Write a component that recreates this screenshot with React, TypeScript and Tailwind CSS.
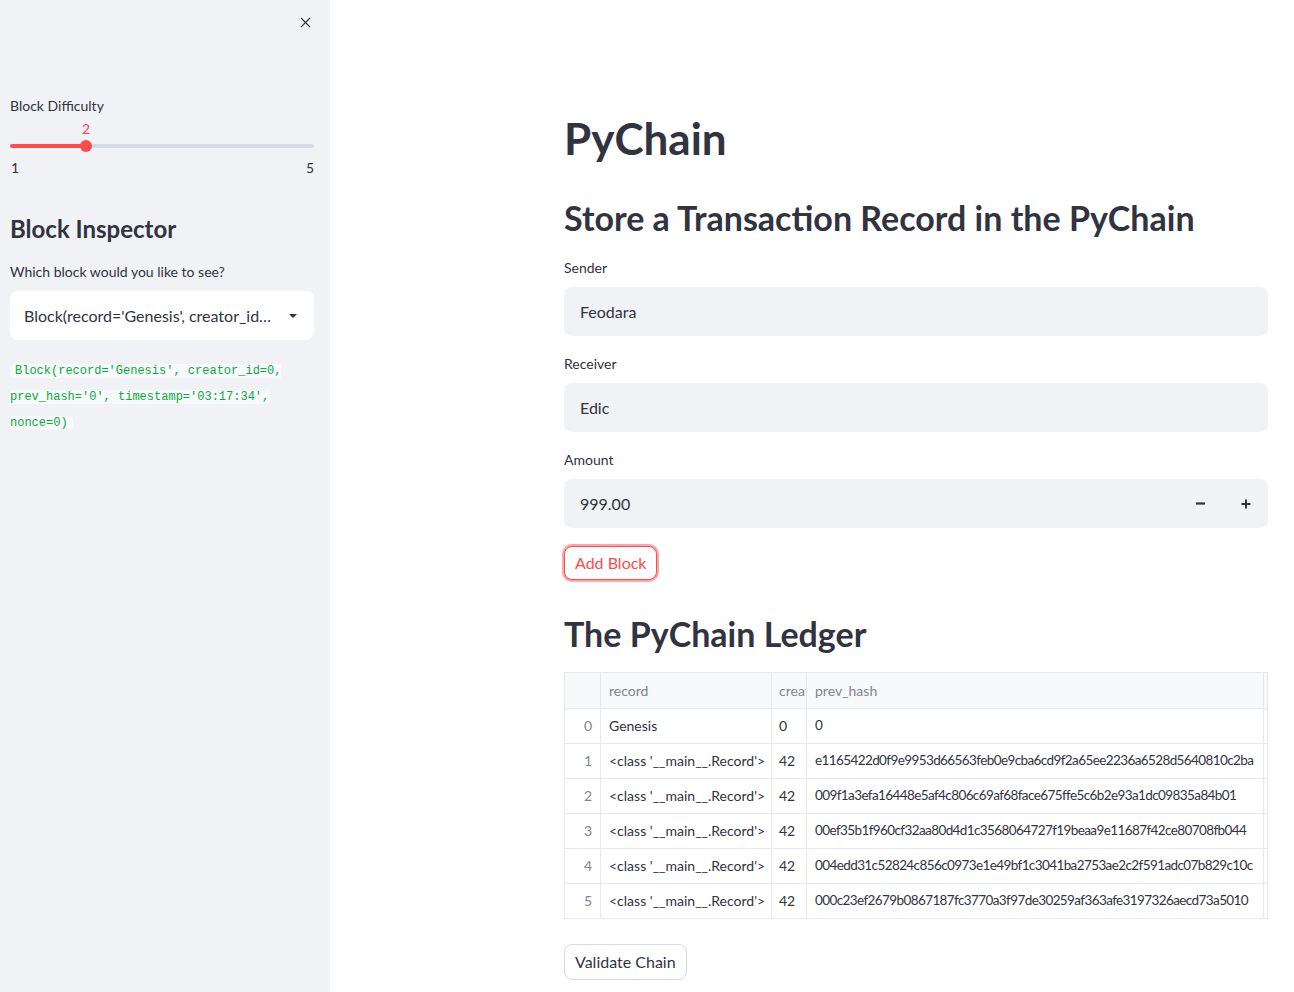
import { X } from 'lucide-react';

const ROWS = [
  { i: 0, record: 'Genesis', creator: '0', hash: '0' },
  { i: 1, record: "<class '__main__.Record'>", creator: '42', hash: 'e1165422d0f9e9953d66563feb0e9cba6cd9f2a65ee2236a6528d5640810c2ba' },
  { i: 2, record: "<class '__main__.Record'>", creator: '42', hash: '009f1a3efa16448e5af4c806c69af68face675ffe5c6b2e93a1dc09835a84b01' },
  { i: 3, record: "<class '__main__.Record'>", creator: '42', hash: '00ef35b1f960cf32aa80d4d1c3568064727f19beaa9e11687f42ce80708fb044' },
  { i: 4, record: "<class '__main__.Record'>", creator: '42', hash: '004edd31c52824c856c0973e1e49bf1c3041ba2753ae2c2f591adc07b829c10c' },
  { i: 5, record: "<class '__main__.Record'>", creator: '42', hash: '000c23ef2679b0867187fc3770a3f97de30259af363afe3197326aecd73a5010' },
];

const SANS = "font-['Lato',sans-serif]";
const MONO = "font-['Liberation_Mono',monospace]";

function TextField({ label, value }: { label: string; value: string }) {
  return (
    <div className="mt-[18px]">
      <div className="h-5 text-sm leading-5 text-[#31333f]">{label}</div>
      <div className="mt-[9px] h-[49px] rounded-lg bg-[#f0f2f6] px-4 flex items-center text-base text-[#31333f]">{value}</div>
    </div>
  );
}

function Sidebar() {
  return (
    <aside className="w-[330px] shrink-0 bg-[#f0f2f6] min-h-screen pl-[10px] pr-4 relative">
      <button className="absolute right-[16px] top-[14px] text-[#31333f]">
        <X size={17} strokeWidth={1.6} />
      </button>
      <div className="pt-[96px] h-5 text-sm leading-5 text-[#31333f] box-content">Block Difficulty</div>
      <div className="relative mt-[3px] h-[20px]">
        <span className="absolute left-[76px] -translate-x-1/2 top-0 text-sm leading-5 text-[#ff4b4b]">2</span>
      </div>
      <div className="relative mt-px h-3 flex items-center">
        <div className="h-1 w-full rounded-full bg-[#d5dae5]" />
        <div className="absolute left-0 h-1 w-[76px] rounded-full bg-[#ff4b4b]" />
        <div className="absolute left-[70px] h-3 w-3 rounded-full bg-[#ff4b4b]" />
      </div>
      <div className="mt-[6px] flex justify-between text-sm leading-5 text-[#31333f]">
        <span className="pl-px">1</span>
        <span>5</span>
      </div>
      <h2 className="mt-[33px] text-2xl font-bold leading-9 text-[#31333f]">Block Inspector</h2>
      <div className="mt-[15px] text-sm leading-5 text-[#31333f]">Which block would you like to see?</div>
      <div className="mt-[9px] h-[49px] rounded-lg bg-white pl-[14px] pr-[16px] flex items-center text-base text-[#31333f]">
        <span className="flex-1 truncate">Block(record='Genesis', creator_id=0, prev_hash='0', timestamp='03:17:34', nonce=0)</span>
        <svg width="10" height="6" viewBox="0 0 10 6" className="ml-4 shrink-0"><path d="M1 1h8L5 5z" fill="#31333f" /></svg>
      </div>
      <p className={`mt-[18px] text-[12px] leading-[26px] ${MONO}`}>
        <code className="bg-[#f8f9fb] text-[#09ab3b] px-[5px] rounded">
          Block(record='Genesis', creator_id=0, prev_hash='0', timestamp='03:17:34', nonce=0)
        </code>
      </p>
    </aside>
  );
}

function Ledger() {
  const grid = 'grid grid-cols-[36px_171px_35px_457px_1fr]';
  const cell = 'px-2 h-[34px] flex items-center whitespace-nowrap overflow-hidden border-r border-[#e6e9ef]';
  return (
    <div className="mt-4 border border-[#e6e9ef] overflow-hidden text-sm text-[#31333f]">
      <div className={`${grid} bg-[#f8f9fb] border-b border-[#e6e9ef]`}>
        <div className={`${cell} h-[35px]`} />
        <div className={`${cell} h-[35px] text-[#808495]`}>record</div>
        <div className={`${cell} h-[35px] text-[#808495] px-[7px]`}>creator_id</div>
        <div className={`${cell} h-[35px] text-[#808495]`}>prev_hash</div>
        <div className="h-[35px]" />
      </div>
      {ROWS.map((r, idx) => (
        <div key={r.i} className={`${grid} ${idx < ROWS.length - 1 ? 'border-b border-[#e6e9ef]' : ''}`}>
          <div className={`${cell} justify-end text-[#808495]`}>{r.i}</div>
          <div className={cell}>{r.record}</div>
          <div className={`${cell} px-[7px]`}>{r.creator}</div>
          <div className={`${cell} text-[13.5px] tracking-[-0.6px]`}>{r.hash}</div>
          <div className="h-[34px]" />
        </div>
      ))}
    </div>
  );
}

export default function App() {
  return (
    <div className={`flex min-h-screen bg-white ${SANS}`}>
      <Sidebar />
      <main className="flex-1 min-w-0 pl-[234px] pr-[26px] pt-[112px] pb-10">
        <h1 className="text-[44px] font-bold leading-[52px] text-[#31333f]">PyChain</h1>
        <h2 className="mt-[32px] text-[34px] font-bold leading-[44px] text-[#31333f]">Store a Transaction Record in the PyChain</h2>
        <div className="mt-px">
          <TextField label="Sender" value="Feodara" />
          <TextField label="Receiver" value="Edic" />
          <div className="mt-[18px]">
            <div className="h-5 text-sm leading-5 text-[#31333f]">Amount</div>
            <div className="mt-[9px] h-[49px] rounded-lg bg-[#f0f2f6] flex items-center text-base text-[#31333f]">
              <span className="flex-1 px-4">999.00</span>
              <div className="flex items-center">
                <span className="w-[45px] flex justify-center">
                  <svg width="9" height="3" viewBox="0 0 9 3"><rect width="9" height="2.2" y="0.4" fill="#31333f" /></svg>
                </span>
                <span className="w-[45px] flex justify-center">
                  <svg width="10" height="10" viewBox="0 0 10 10"><path d="M5 0.5v9M0.5 5h9" stroke="#31333f" strokeWidth="2" /></svg>
                </span>
              </div>
            </div>
          </div>
        </div>
        <button className="mt-[18px] h-[34px] px-[10px] rounded-lg border border-[#ff4b4b] bg-white text-base text-[#ff4b4b] ring-2 ring-[#ff4b4b]/50">
          Add Block
        </button>
        <h2 className="mt-[32px] text-[34px] font-bold leading-[44px] text-[#31333f]">The PyChain Ledger</h2>
        <Ledger />
        <button className="mt-[25px] h-[36px] px-[10px] rounded-lg border border-[#d5dae5] bg-white text-base text-[#31333f]">
          Validate Chain
        </button>
      </main>
    </div>
  );
}
